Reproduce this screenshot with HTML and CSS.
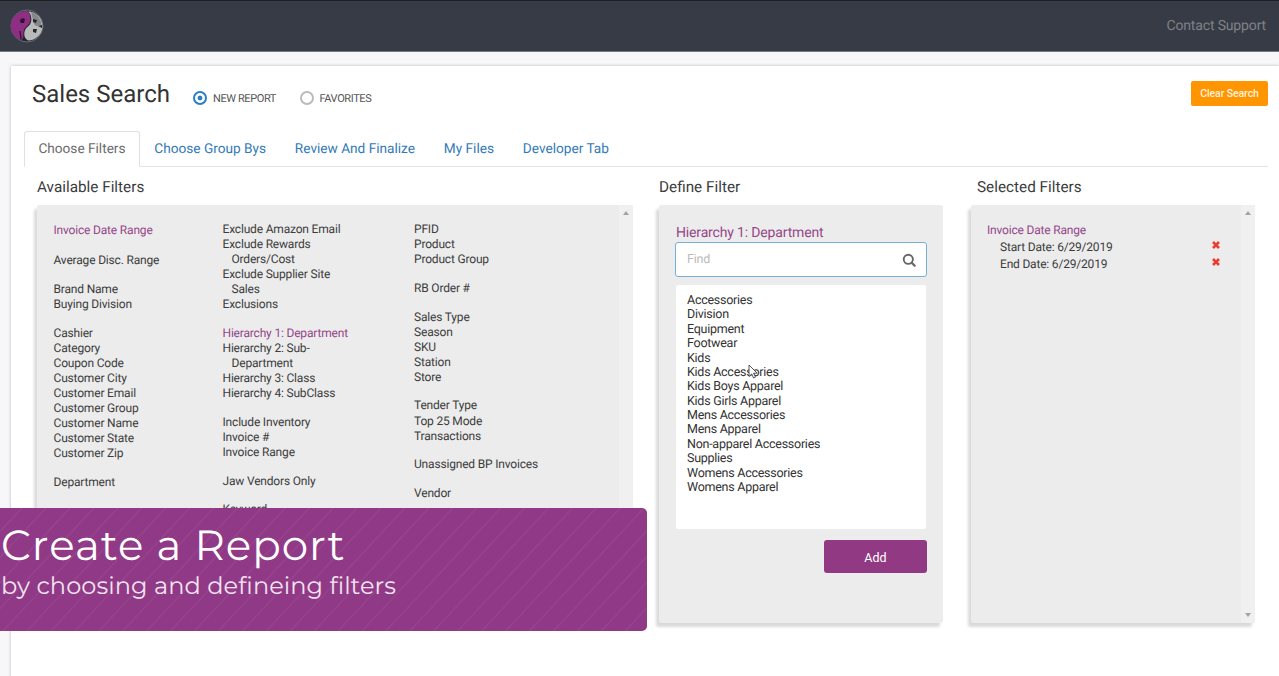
FILE: index.html
```html
<!DOCTYPE html>
<html lang="en">
<head>
    <meta charset="UTF-8">
    <meta name="viewport" content="width=device-width, initial-scale=1.0">
    <title>Sales Search</title>
    <link rel="stylesheet" href="styles.css">
</head>
<body>
    <header class="navbar">
        <svg class="logo" viewBox="0 0 34 34" width="34" height="34">
            <circle cx="17" cy="17" r="16" fill="#20242b" stroke="#6b6e76" stroke-width="1"/>
            <path d="M18 2.500 A14.500 14.500 0 0 1 18 31.500 C13 29 13 21 18 17.500 C23 14 22 5 18 2.500Z" fill="#b9bbbb"/>
            <path d="M21 3 A14.500 14.500 0 0 1 31.500 16 L27 17 Q23 16 22.500 9Z" fill="#85888a"/>
            <path d="M16.500 2 A14.800 14.800 0 0 0 10 30.500 C15 32 12.500 25 14 21 C15.500 17 21 16 20.500 9 C20 4 18 2 16.500 2Z" fill="#8d2f83"/>
            <path d="M10 11q2-3 5-1l-1 4h-3.500z" fill="#35122f"/>
            <path d="M23 10l4 1-1 3-3-1zM23 20l4 0-1 4-3-1zM28 17l4-1v3z" fill="#24272c"/>
            <path d="M10 22l1 8" stroke="#35122f" stroke-width="1.200"/>
        </svg>
        <a class="support-link">Contact Support</a>
    </header>

    <main class="card">
        <div class="title-row">
            <h1>Sales Search</h1>
            <label class="radio checked"><span class="dot"></span>NEW REPORT</label>
            <label class="radio"><span class="dot"></span>FAVORITES</label>
            <button class="clear-btn">Clear Search</button>
        </div>

        <nav class="tabs">
            <a class="tab active">Choose Filters</a>
            <a class="tab">Choose Group Bys</a>
            <a class="tab">Review And Finalize</a>
            <a class="tab">My Files</a>
            <a class="tab">Developer Tab</a>
        </nav>

        <div class="columns">
            <section class="available">
                <h2>Available Filters</h2>
                <div class="panel filter-list">
                    <div class="filter-col first">
                        <ul>
                            <li class="picked">Invoice Date Range</li>
                        </ul>
                        <ul>
                            <li>Average Disc. Range</li>
                        </ul>
                        <ul>
                            <li>Brand Name</li>
                            <li>Buying Division</li>
                        </ul>
                        <ul>
                            <li>Cashier</li>
                            <li>Category</li>
                            <li>Coupon Code</li>
                            <li>Customer City</li>
                            <li>Customer Email</li>
                            <li>Customer Group</li>
                            <li>Customer Name</li>
                            <li>Customer State</li>
                            <li>Customer Zip</li>
                        </ul>
                        <ul>
                            <li>Department</li>
                        </ul>
                    </div>
                    <div class="filter-col second">
                        <ul>
                            <li>Exclude Amazon Email</li>
                            <li>Exclude Rewards<br>Orders/Cost</li>
                            <li>Exclude Supplier Site<br>Sales</li>
                            <li>Exclusions</li>
                        </ul>
                        <ul>
                            <li class="picked">Hierarchy 1: Department</li>
                            <li>Hierarchy 2: Sub-<br>Department</li>
                            <li>Hierarchy 3: Class</li>
                            <li>Hierarchy 4: SubClass</li>
                        </ul>
                        <ul>
                            <li>Include Inventory</li>
                            <li>Invoice #</li>
                            <li>Invoice Range</li>
                        </ul>
                        <ul>
                            <li>Jaw Vendors Only</li>
                        </ul>
                        <ul>
                            <li>Keyword</li>
                        </ul>
                    </div>
                    <div class="filter-col third">
                        <ul>
                            <li>PFID</li>
                            <li>Product</li>
                            <li>Product Group</li>
                        </ul>
                        <ul>
                            <li>RB Order #</li>
                        </ul>
                        <ul>
                            <li>Sales Type</li>
                            <li>Season</li>
                            <li>SKU</li>
                            <li>Station</li>
                            <li>Store</li>
                        </ul>
                        <ul>
                            <li>Tender Type</li>
                            <li>Top 25 Mode</li>
                            <li>Transactions</li>
                        </ul>
                        <ul>
                            <li>Unassigned BP Invoices</li>
                        </ul>
                        <ul>
                            <li>Vendor</li>
                        </ul>
                    </div>
                    <div class="scrollbar"><i class="up"></i><i class="down"></i></div>
                </div>
            </section>

            <section class="define">
                <h2>Define Filter</h2>
                <div class="panel define-panel">
                    <h3>Hierarchy 1: Department</h3>
                    <div class="find-box">
                        <span>Find</span>
                        <svg viewBox="0 0 14 14" width="14" height="14">
                            <circle cx="6.300" cy="6.300" r="4.600" fill="none" stroke="#666" stroke-width="1.900"/>
                            <path d="M9.800 9.800L12.700 12.700" stroke="#666" stroke-width="2.200" stroke-linecap="round"/>
                        </svg>
                    </div>
                    <ul class="options">
                        <li>Accessories</li>
                        <li>Division</li>
                        <li>Equipment</li>
                        <li>Footwear</li>
                        <li>Kids</li>
                        <li>Kids Accessories</li>
                        <li>Kids Boys Apparel</li>
                        <li>Kids Girls Apparel</li>
                        <li>Mens Accessories</li>
                        <li>Mens Apparel</li>
                        <li>Non-apparel Accessories</li>
                        <li>Supplies</li>
                        <li>Womens Accessories</li>
                        <li>Womens Apparel</li>
                    </ul>
                    <button class="add-btn">Add</button>
                </div>
            </section>

            <section class="selected">
                <h2>Selected Filters</h2>
                <div class="panel selected-panel">
                    <div class="selected-list">
                        <div class="picked">Invoice Date Range</div>
                        <div class="value-row">
                            <span>Start Date: 6/29/2019</span>
                            <svg viewBox="0 0 8 8" width="8" height="8"><path d="M1 1L7 7M7 1L1 7" stroke="#f0392f" stroke-width="2.500"/></svg>
                        </div>
                        <div class="value-row">
                            <span>End Date: 6/29/2019</span>
                            <svg viewBox="0 0 8 8" width="8" height="8"><path d="M1 1L7 7M7 1L1 7" stroke="#f0392f" stroke-width="2.500"/></svg>
                        </div>
                    </div>
                    <div class="scrollbar"><i class="up"></i><i class="down"></i></div>
                </div>
            </section>
        </div>
    </main>

    <div class="banner">
        <div class="banner-title">Create a Report</div>
        <div class="banner-text">by choosing and defineing filters</div>
    </div>

    <svg class="cursor" viewBox="0 0 10 15" width="10" height="15">
        <path d="M1 1v11.500l2.700-2.500 1.900 4 1.900-.9-1.900-3.900h3.600z" fill="#fff" stroke="#444" stroke-width=".9"/>
    </svg>
</body>
</html>
```
FILE: styles.css
```css
* {
    box-sizing: border-box;
}
body {
    margin: 0;
    height: 676px;
    overflow: hidden;
    background-color: #f7f7f9;
    font-family: Roboto, Arial, sans-serif;
    color: #3c3c3c;
    text-rendering: geometricPrecision;
}
h1, h2, h3, ul {
    margin: 0;
    padding: 0;
    font-weight: 400;
}
ul {
    list-style: none;
}
.navbar {
    height: 52px;
    display: flex;
    justify-content: space-between;
    align-items: center;
    padding: 0 13px 0 10px;
    background-color: #363b45;
    border-top: 1px solid #1f1f24;
    border-bottom: 1px solid #77797f;
}
.support-link {
    font-size: 14px;
    letter-spacing: -0.15px;
    color: #7f8286;
}
.card {
    margin: 14px 0 0 11px;
    height: 620px;
    padding: 0 11px 0 13px;
    background-color: #fff;
    box-shadow: 0 0 3px rgba(0, 0, 0, 0.25);
}
.title-row {
    display: flex;
    align-items: center;
    height: 65px;
    padding-left: 8px;
}
.title-row h1 {
    width: 161px;
    font-size: 24px;
    line-height: 30px;
    margin-top: -10px;
    color: #333;
}
.radio {
    display: flex;
    align-items: center;
    font-size: 11px;
    letter-spacing: -0.4px;
    margin: -1px 23.500px 0 0;
    color: #555;
}
.dot {
    width: 14px;
    height: 14px;
    margin-right: 6px;
    border: 2px solid #bbb;
    border-radius: 50%;
}
.checked .dot {
    border-color: #2a7fc1;
    background: radial-gradient(circle, #2a7fc1 2px, #fff 2.800px);
}
.clear-btn {
    width: 77px;
    height: 25px;
    margin: -10px 0 0 auto;
    padding: 0 0 1px;
    border: none;
    border-radius: 2px;
    background-color: #ff9500;
    color: #fff3dd;
    font: 500 10.500px Roboto, sans-serif;
    letter-spacing: -0.1px;
}
.tabs {
    display: flex;
    height: 36px;
    border-bottom: 1px solid #e3e3e3;
}
.tab {
    height: 36px;
    padding: 0 13.400px;
    border: 1px solid transparent;
    font-size: 13.650px;
    line-height: 35px;
    color: #337ab7;
}
.tab.active {
    border-color: #e0e0e0;
    border-bottom-color: #fff;
    border-radius: 3px 3px 0 0;
    background-color: #fff;
    color: #6b6b6b;
}
.columns {
    display: flex;
    padding-left: 13px;
}
.columns h2 {
    height: 38px;
    font-size: 15.300px;
    line-height: 40px;
}
.available {
    width: 596px;
    margin-right: 26px;
}
.define {
    width: 284px;
    margin-right: 28px;
}
.selected {
    width: 284px;
}
.selected h2 {
    padding-left: 6px;
}
.panel {
    height: 418px;
    border-radius: 2px;
    background-color: #ececec;
    box-shadow: -3px 4px 3px rgba(0, 0, 0, 0.15);
}
.picked {
    color: #95478a;
}
.filter-list {
    display: flex;
    font-size: 12px;
    line-height: 15.050px;
    letter-spacing: -0.18px;
}
.filter-col {
    padding-top: 17px;
}
.filter-col ul {
    margin-bottom: 13.700px;
}
.filter-col li {
    padding-left: 9px;
    text-indent: -9px;
}
.filter-col.first {
    width: 185.500px;
    padding: 18px 0 0 16.500px;
}
.filter-col.first ul:first-child {
    margin-bottom: 15px;
}
.filter-col.second {
    width: 191.500px;
}
.scrollbar {
    width: 14px;
    margin-left: auto;
    padding: 6px 3px;
    display: flex;
    flex-direction: column;
    justify-content: space-between;
    align-items: center;
    background-color: #f0f0f0;
}
.up, .down {
    border: 3px solid transparent;
}
.up {
    border-top: none;
    border-bottom: 4px solid #a3a3a3;
}
.down {
    border-bottom: none;
    border-top: 4px solid #a3a3a3;
}
.define-panel {
    padding: 18px 16px 0;
    display: flex;
    flex-direction: column;
}
.define-panel h3 {
    height: 19px;
    padding-left: 1px;
    font-size: 14px;
    line-height: 20px;
    letter-spacing: -0.16px;
    color: #95478a;
}
.find-box {
    height: 35px;
    padding: 0 10px 0 11px;
    display: flex;
    justify-content: space-between;
    align-items: center;
    border: 1px solid #76b0d4;
    border-radius: 3px;
    background-color: #fff;
    font-size: 12.500px;
    letter-spacing: -0.2px;
    color: #bbb;
}
.options {
    height: 244px;
    margin: 8px 1px 11px;
    padding: 9px 11px;
    border-radius: 2px;
    background-color: #fff;
    font-size: 12.500px;
    line-height: 14.380px;
    letter-spacing: -0.26px;
    color: #333;
}
.add-btn {
    align-self: flex-end;
    width: 103px;
    height: 33px;
    padding: 2px 0 0;
    border: none;
    border-radius: 3px;
    background-color: #913a83;
    color: #fff;
    font: 12.500px Roboto, sans-serif;
}
.selected-panel {
    display: flex;
    font-size: 12px;
    line-height: 17px;
    letter-spacing: -0.19px;
}
.selected-list {
    flex: 1;
    padding: 17px 21px 0 16px;
}
.value-row {
    display: flex;
    justify-content: space-between;
    align-items: center;
    padding-left: 13px;
}
.value-row svg {
    margin-top: -5px;
}
.banner {
    position: absolute;
    left: 0;
    top: 508px;
    width: 647px;
    height: 123px;
    padding: 8px 0 0 1px;
    border-radius: 0 5px 5px 0;
    background: repeating-linear-gradient(133deg, #903986 0, #903986 15px, #97448d 16px, #903986 17.500px);
    color: #fff;
    font-family: Montserrat, Inter, sans-serif;
    font-weight: 400;
    white-space: nowrap;
}
.banner-title {
    font-size: 42px;
    line-height: 59px;
    letter-spacing: 1.040px;
}
.banner-text {
    font-size: 24px;
    line-height: 24px;
    letter-spacing: 0.080px;
    color: #f3e3f1;
}
.cursor {
    position: absolute;
    left: 748px;
    top: 364px;
}
```
